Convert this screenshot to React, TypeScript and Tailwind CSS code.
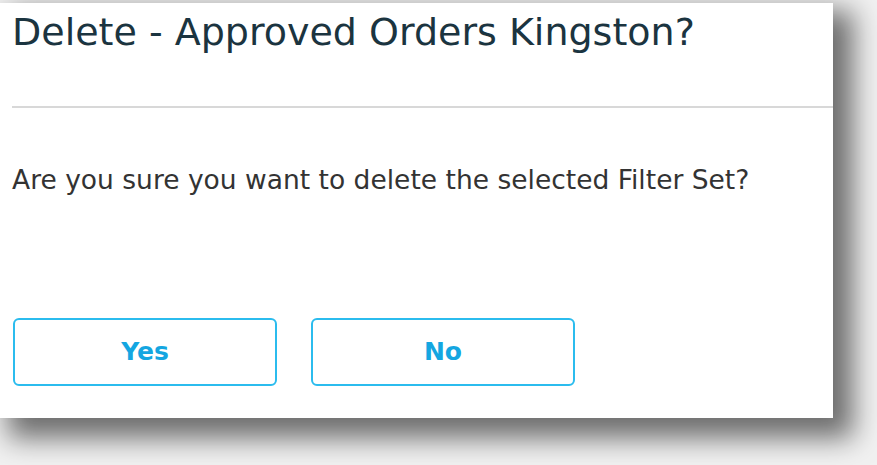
export default function App() {
  return (
    <div className="w-[877px] h-[465px] overflow-hidden bg-[#f1f1f1] pt-[3px]">
      <div
        className="w-[833px] h-[415px] bg-white flex flex-col shadow-[14px_14px_26px_6px_rgba(0,0,0,0.55)]"
        style={{ fontFamily: '"DejaVu Sans", "Open Sans", sans-serif' }}
      >
        <div className="pl-[12px] h-[103px] pt-[6px]">
          <h1 className="text-[38px] leading-[46px] text-[#1b3440]">
            Delete - Approved Orders Kingston?
          </h1>
        </div>
        <div className="ml-[12px] h-[2px] bg-[#d8d8d8]" />
        <p className="pl-[12px] pt-[56px] text-[26.5px] leading-[32px] text-[#333333]">
          Are you sure you want to delete the selected Filter Set?
        </p>
        <div className="flex gap-[34px] pl-[13px] pt-[122px]">
          <button className="w-[264px] h-[68px] rounded-[6px] border-2 border-[#2bbcee] text-[#14a6e1] text-[25px] font-bold">
            Yes
          </button>
          <button className="w-[264px] h-[68px] rounded-[6px] border-2 border-[#2bbcee] text-[#14a6e1] text-[25px] font-bold">
            No
          </button>
        </div>
      </div>
    </div>
  );
}
